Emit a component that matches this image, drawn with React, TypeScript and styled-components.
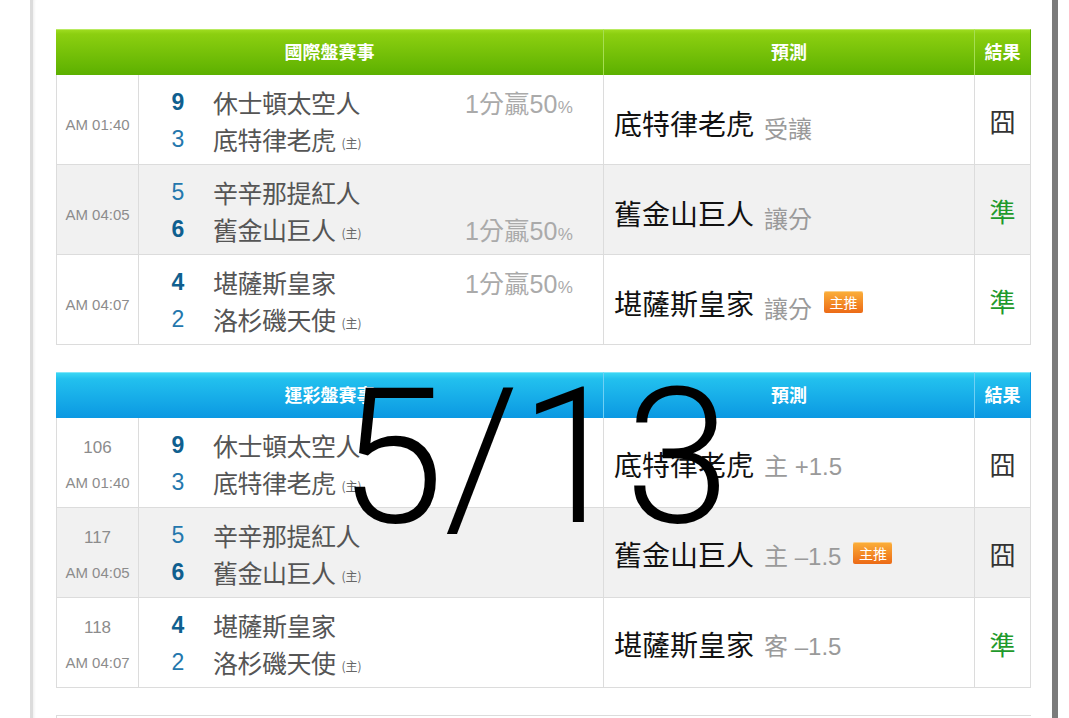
import React from 'react';
import styled, { createGlobalStyle, css } from 'styled-components';

const GlobalStyle = createGlobalStyle`
    html, body {
        margin: 0;
        padding: 0;
        background: #fff;
    }
    body {
        font-family: "Liberation Sans", "Noto Sans CJK TC", sans-serif;
        overflow: hidden;
    }
`;

const Screen = styled.div`
    position: relative;
    width: 1069px;
    height: 718px;
    overflow: hidden;
`;

const Page = styled.div`
    margin-left: 30px;
    width: 1028px;
    min-height: 718px;
    padding: 29px 22px 0 23px;
    box-sizing: border-box;
    border-left: 3px solid #dcdcdc;
    border-right: 6px solid #7b7b7b;
    box-shadow: inset 3px 0 3px -2px #ececec;
`;

const Board = styled.div`
    display: grid;
    grid-template-columns: 82px 465px 371px 56px;
    width: 975px;
    border-left: 1px solid #dcdcdc;
    margin-bottom: 27px;
`;

const HeaderCell = styled.div<{ $tone: 'green' | 'blue'; $span?: number; $last?: boolean }>`
    grid-column: span ${(p) => p.$span || 1};
    height: 46px;
    box-sizing: border-box;
    display: flex;
    align-items: center;
    justify-content: center;
    padding-bottom: 3px;
    color: #fff;
    font-size: 18px;
    font-weight: bold;
    font-family: "Noto Sans CJK TC", sans-serif;
    ${(p) =>
        p.$tone === 'green'
            ? css`
                  background: linear-gradient(#9ddb1e 0px, #8ccf10 4px, #5cb000 100%);
                  border-top: 1px solid #b9ea62;
                  border-right: 1px solid ${p.$last ? '#5cb000' : '#a6de52'};
              `
            : css`
                  background: linear-gradient(#3ad6f4 0px, #22c0ee 6px, #0b98e2 100%);
                  border-top: 1px solid #7fe6fa;
                  border-right: 1px solid ${p.$last ? '#0b98e2' : '#6fd0f4'};
              `}
    margin-left: ${(p) => (p.$span === 2 ? '-1px' : '0')};
`;

const Cell = styled.div<{ $shade?: boolean }>`
    height: 90px;
    box-sizing: border-box;
    border-right: 1px solid #dcdcdc;
    border-bottom: 1px solid #dcdcdc;
    background: ${(p) => (p.$shade ? '#f1f1f1' : '#fff')};
    display: flex;
    align-items: center;
`;

const TimeCell = styled(Cell)<{ $numbered?: boolean }>`
    flex-direction: column;
    justify-content: center;
    gap: 16px;
    padding-top: ${(p) => (p.$numbered ? '4px' : '10px')};
    color: #8c8c8c;
    font-size: 15px;
    font-family: "Liberation Sans", sans-serif;
`;

const GameNo = styled.div`
    font-size: 17px;
    line-height: 20px;
`;

const Clock = styled.div`
    line-height: 18px;
`;

const MatchCell = styled(Cell)`
    flex-direction: column;
    align-items: stretch;
    justify-content: center;
    gap: 1px;
    padding: 2px 30px 0 22px;
`;

const TeamLine = styled.div`
    display: flex;
    align-items: center;
    height: 36px;
`;

const Score = styled.span<{ $win?: boolean }>`
    width: 34px;
    text-align: center;
    font-size: 23px;
    font-family: "Liberation Sans", sans-serif;
    color: ${(p) => (p.$win ? '#0f5f8f' : '#2477ad')};
    font-weight: ${(p) => (p.$win ? 'bold' : 'normal')};
    margin-right: 18px;
`;

const TeamName = styled.span`
    font-size: 25px;
    color: #555;
    font-family: "Noto Sans CJK TC", sans-serif;
    letter-spacing: -0.5px;
`;

const HomeMark = styled.span`
    font-size: 12px;
    color: #666;
    margin-left: 6px;
    margin-top: 6px;
    font-family: "Noto Sans CJK TC", sans-serif;
`;

const Odds = styled.span`
    margin-left: auto;
    font-size: 25px;
    color: #aaa;
    font-family: "Liberation Sans", "Noto Sans CJK TC", sans-serif;
    letter-spacing: 0.2px;
`;

const Percent = styled.span`
    font-size: 17px;
`;

const PickCell = styled(Cell)<{ $low?: boolean }>`
    padding: ${(p) => (p.$low ? '6px' : '2px')} 0 0 10px;
    gap: 10px;
`;

const PickName = styled.span`
    font-size: 28px;
    color: #111;
    font-family: "Noto Sans CJK TC", sans-serif;
`;

const PickNote = styled.span<{ $low?: boolean }>`
    font-size: 24px;
    color: #9a9a9a;
    font-family: "Liberation Sans", "Noto Sans CJK TC", sans-serif;
    margin-top: ${(p) => (p.$low ? '9px' : '2px')};
`;

const Badge = styled.span`
    display: inline-flex;
    align-items: center;
    justify-content: center;
    width: 39px;
    height: 22px;
    border-radius: 2px;
    background: linear-gradient(#fbb03a, #ec6a16);
    color: #fff;
    font-size: 14px;
    font-family: "Noto Sans CJK TC", sans-serif;
    box-shadow: inset 0 1px 0 rgba(255, 255, 255, 0.4);
    margin-left: 2px;
    margin-top: -2px;
`;

const ResultCell = styled(Cell)<{ $hit?: boolean }>`
    justify-content: center;
    font-size: 26px;
    font-family: "Noto Sans CJK TC", sans-serif;
    color: ${(p) => (p.$hit ? '#1f9a2c' : '#333')};
    padding-top: 2px;
`;

const NextBoard = styled.div`
    width: 975px;
    height: 20px;
    box-sizing: border-box;
    border-top: 1px solid #dcdcdc;
    border-left: 1px solid #dcdcdc;
`;

const DateStamp = styled.div`
    position: absolute;
    left: 0;
    right: 0;
    top: 362px;
    text-align: center;
    font-family: Roboto, "Liberation Sans", sans-serif;
    font-weight: 300;
    font-size: 190px;
    line-height: 1;
    color: #000;
    pointer-events: none;
`;

interface Team {
    name: string;
    score: number;
    home?: boolean;
    odds?: boolean;
}

interface Game {
    no?: string;
    time: string;
    away: Team;
    home: Team;
    pick: string;
    note: string;
    badge?: boolean;
    hit: boolean;
}

const intl: Game[] = [
    {
        time: 'AM 01:40',
        away: { name: '休士頓太空人', score: 9, odds: true },
        home: { name: '底特律老虎', score: 3, home: true },
        pick: '底特律老虎',
        note: '受讓',
        hit: false,
    },
    {
        time: 'AM 04:05',
        away: { name: '辛辛那提紅人', score: 5 },
        home: { name: '舊金山巨人', score: 6, home: true, odds: true },
        pick: '舊金山巨人',
        note: '讓分',
        hit: true,
    },
    {
        time: 'AM 04:07',
        away: { name: '堪薩斯皇家', score: 4, odds: true },
        home: { name: '洛杉磯天使', score: 2, home: true },
        pick: '堪薩斯皇家',
        note: '讓分',
        badge: true,
        hit: true,
    },
];

const lottery: Game[] = [
    {
        no: '106',
        time: 'AM 01:40',
        away: { name: '休士頓太空人', score: 9 },
        home: { name: '底特律老虎', score: 3, home: true },
        pick: '底特律老虎',
        note: '主 +1.5',
        hit: false,
    },
    {
        no: '117',
        time: 'AM 04:05',
        away: { name: '辛辛那提紅人', score: 5 },
        home: { name: '舊金山巨人', score: 6, home: true },
        pick: '舊金山巨人',
        note: '主 –1.5',
        badge: true,
        hit: false,
    },
    {
        no: '118',
        time: 'AM 04:07',
        away: { name: '堪薩斯皇家', score: 4 },
        home: { name: '洛杉磯天使', score: 2, home: true },
        pick: '堪薩斯皇家',
        note: '客 –1.5',
        hit: true,
    },
];

const Line: React.FC<{ team: Team; win: boolean }> = ({ team, win }) => (
    <TeamLine>
        <Score $win={win}>{team.score}</Score>
        <TeamName>{team.name}</TeamName>
        {team.home && <HomeMark>(主)</HomeMark>}
        {team.odds && (
            <Odds>
                1分贏50<Percent>%</Percent>
            </Odds>
        )}
    </TeamLine>
);

const GameBoard: React.FC<{ title: string; tone: 'green' | 'blue'; games: Game[]; lowNote?: boolean }> = ({
    title,
    tone,
    games,
    lowNote,
}) => (
    <Board>
        <HeaderCell $tone={tone} $span={2}>
            {title}
        </HeaderCell>
        <HeaderCell $tone={tone}>預測</HeaderCell>
        <HeaderCell $tone={tone} $last>
            結果
        </HeaderCell>
        {games.map((g, i) => {
            const shade = i % 2 === 1;
            return (
                <React.Fragment key={i}>
                    <TimeCell $shade={shade} $numbered={!!g.no}>
                        {g.no && <GameNo>{g.no}</GameNo>}
                        <Clock>{g.time}</Clock>
                    </TimeCell>
                    <MatchCell $shade={shade}>
                        <Line team={g.away} win={g.away.score > g.home.score} />
                        <Line team={g.home} win={g.home.score > g.away.score} />
                    </MatchCell>
                    <PickCell $shade={shade} $low={lowNote}>
                        <PickName>{g.pick}</PickName>
                        <PickNote $low={lowNote}>{g.note}</PickNote>
                        {g.badge && <Badge>主推</Badge>}
                    </PickCell>
                    <ResultCell $shade={shade} $hit={g.hit}>
                        {g.hit ? '準' : '囧'}
                    </ResultCell>
                </React.Fragment>
            );
        })}
    </Board>
);

const App: React.FC = () => (
    <Screen>
        <GlobalStyle />
        <Page>
            <GameBoard title="國際盤賽事" tone="green" games={intl} lowNote />
            <GameBoard title="運彩盤賽事" tone="blue" games={lottery} />
            <NextBoard />
        </Page>
        <DateStamp>5/13</DateStamp>
    </Screen>
);

export default App;
